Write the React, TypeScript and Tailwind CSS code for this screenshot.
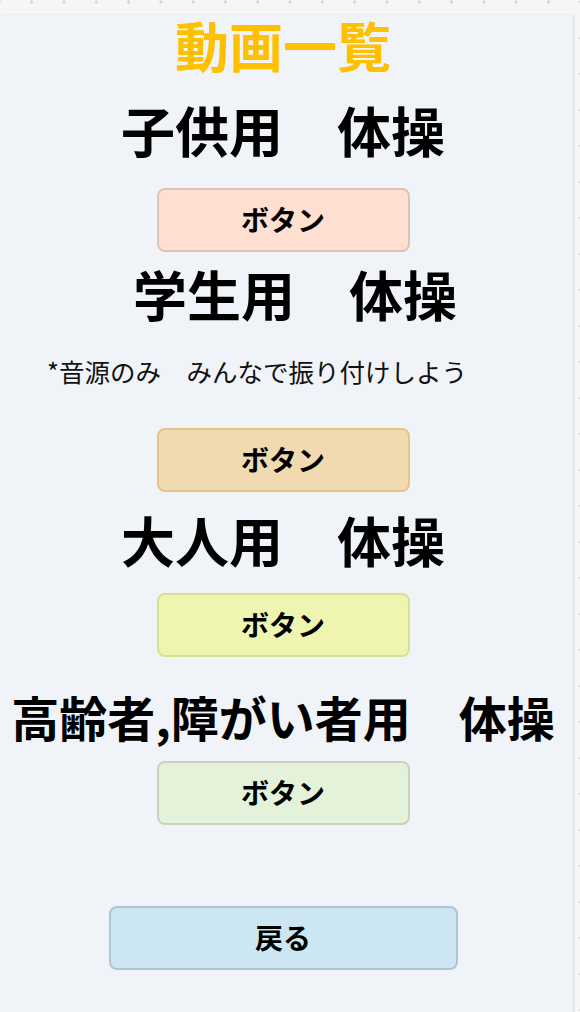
const jp = "font-['Noto_Sans_CJK_JP','Noto_Sans',sans-serif]";

const Btn = ({ label, cls }: { label: string; cls: string }) => (
  <button
    className={`mx-auto flex h-[64px] w-[253px] items-center justify-center rounded-[8px] border-2 pb-[3px] text-[28px] font-bold text-black ${cls}`}
  >
    {label}
  </button>
);

const App = () => {
  return (
    <div className="h-[1012px] w-[580px] overflow-hidden bg-[#f6f6f6] bg-[radial-gradient(circle,#d6d6d6_1.6px,transparent_1.8px)] bg-[length:32.3px_36px] bg-[position:15.5px_-16px] pt-[4px]">
      <div
        className={`${jp} h-[1008px] w-[573px] bg-[#f0f3f8] pr-[7px] shadow-[1px_0_2px_rgba(0,0,0,0.12)]`}
      >
        {/* title */}
        <h1 className="mt-[11px] h-[64px] text-center text-[54px] font-bold leading-[60px] text-[#ffc000]">
          動画一覧
        </h1>

        {/* kids */}
        <h2 className="mt-[22px] h-[64px] text-center text-[54px] font-bold leading-[58px] text-black">
          子供用　体操
        </h2>
        <div className="mt-[23px]">
          <Btn label="ボタン" cls="bg-[#ffdfd0] border-[#dcc3b6]" />
        </div>

        {/* students */}
        <h2 className="mt-[13px] h-[64px] pl-[24px] text-center text-[54px] font-bold leading-[58px] text-black">
          学生用　体操
        </h2>
        <p className="mt-[28px] h-[30px] pl-[47px] text-[25.5px] leading-[28px] text-[#111]">
          *音源のみ　みんなで振り付けしよう
        </p>
        <div className="mt-[41px]">
          <Btn label="ボタン" cls="bg-[#f1dab0] border-[#e5c486]" />
        </div>

        {/* adults */}
        <h2 className="mt-[19px] h-[64px] text-center text-[54px] font-bold leading-[58px] text-black">
          大人用　体操
        </h2>
        <div className="mt-[18px]">
          <Btn label="ボタン" cls="bg-[#eff5b0] border-[#d9e08f]" />
        </div>

        {/* seniors */}
        <h2 className="mt-[32px] h-[58px] whitespace-nowrap text-center text-[48px] font-bold leading-[54px] text-black">
          高齢者,障がい者用　体操
        </h2>
        <div className="mt-[14px]">
          <Btn label="ボタン" cls="bg-[#e5f2da] border-[#c8d3b9]" />
        </div>

        {/* back */}
        <button className="mx-auto mt-[81px] flex h-[64px] w-[349px] items-center justify-center rounded-[8px] border-2 border-[#adc6d4] bg-[#cde6f4] pb-[3px] text-[28px] font-bold text-black">
          戻る
        </button>
      </div>
    </div>
  );
};

export default App;
